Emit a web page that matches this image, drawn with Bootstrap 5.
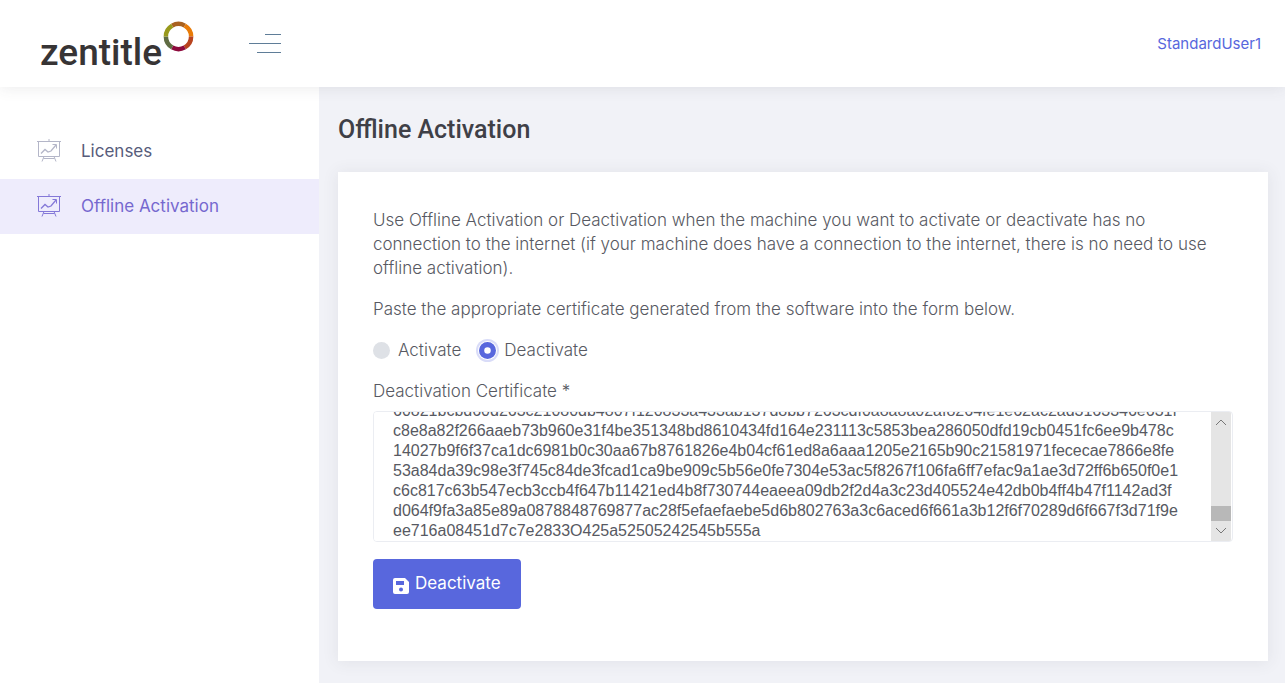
<!DOCTYPE html>
<html lang="en">
<head>
<meta charset="utf-8">
<meta name="viewport" content="width=device-width, initial-scale=1">
<title>Zentitle - Offline Activation</title>
<link href="https://cdn.jsdelivr.net/npm/bootstrap@5.3.0/dist/css/bootstrap.min.css" rel="stylesheet">
<style>
  body { font-family: Inter, "Open Sans", sans-serif; font-size: 17px; line-height: 24px; font-weight: 300; color: #575962; background: #f1f2f7; }
  .topbar { height: 87px; padding: 0 24px 0 40px; background: #fff; box-shadow: 0 0 15px rgba(69,65,78,.12); z-index: 2; }
  .logo-word { font-family: Roboto, sans-serif; font-size: 37px; font-weight: 500; fill: #373435; }
  .menu-toggle { margin-left: 54px; }
  .user-link { font-size: 15px; line-height: 20px; font-weight: 400; color: #5867dd; }
  .sidebar { width: 319px; padding-top: 37px; background: #fff; }
  .sidebar .nav-link { height: 55px; padding: 0 37px 2px; gap: 20px; font-size: 17px; font-weight: 400; color: #575c7b; }
  .sidebar .nav-link svg { color: #b4b6c8; }
  .sidebar .nav-link.active { background: #eeecfc; color: #7668cf; }
  .sidebar .nav-link.active svg { color: #8478d8; }
  .content { padding: 28px 17px 22px 19px; }
  .page-title { font-family: Roboto, sans-serif; font-size: 25px; line-height: 30px; font-weight: 500; color: #3f4047; margin-bottom: 27px; }
  .panel { padding: 36px 35px 52px; background: #fff; box-shadow: 0 1px 15px 1px rgba(69,65,78,.08); }
  .stack-item { margin-bottom: 17px; }
  .form-check-input { width: 17px; height: 17px; margin: 0; border: 0; background-color: #dee1e6; }
  .form-check-input:checked { background-color: #5867dd; background-size: 13px 13px; box-shadow: 0 0 0 1px #fff, 0 0 0 3px #d9dcf8; }
  .choices { gap: 18px; }
  .choice { gap: 8px; }
  .cert-field { height: 131px; border: 1px solid #ebedf2; border-radius: 4px; overflow: hidden; }
  .cert-field textarea { font-family: "Liberation Sans", sans-serif; font-size: 16px; line-height: 20px; font-weight: 400; color: #575962; padding: 0 16px 0 19px; border: 0; border-radius: 0; resize: none; overflow: hidden; white-space: pre; }
  .cert-field textarea:focus { color: #575962; box-shadow: none; }
  .scroll-track { width: 20px; margin-right: 1px; background: #e5e5e5; }
  .scroll-thumb { height: 15px; background: #b8b8b8; }
  .btn-submit { height: 50px; padding: 0 20px; gap: 6px; font-size: 17px; font-weight: 400; color: #fff; background: #5867dd; border: 0; border-radius: 4px; }
  .btn-submit:hover { color: #fff; background: #4757d6; }
</style>
</head>
<body class="min-vh-100 d-flex flex-column">
<header class="topbar d-flex align-items-center position-relative">
  <a href="#" aria-label="zentitle">
    <svg class="d-block" width="155" height="60" viewBox="0 0 155 60">
      <text class="logo-word" x="0" y="51">zentitle</text>
      <g fill="none" stroke-width="4.5" transform="translate(138.5 22.500)">
        <path stroke="#a9611f" d="M-6.3 -10.9A12.6 12.6 0 0 1 6.3 -10.9"/>
        <path stroke="#e87b07" d="M6.3 -10.9A12.6 12.6 0 0 1 12.6 0"/>
        <path stroke="#b8441f" d="M12.6 0A12.6 12.6 0 0 1 6.3 10.9"/>
        <path stroke="#8d0a3c" d="M6.3 10.9A12.6 12.6 0 0 1 -6.3 10.9"/>
        <path stroke="#5f6c43" d="M-6.3 10.9A12.6 12.6 0 0 1 -12.6 0"/>
        <path stroke="#98991c" d="M-12.6 0A12.6 12.6 0 0 1 -6.3 -10.9"/>
      </g>
    </svg>
  </a>
  <button type="button" class="menu-toggle btn p-0 border-0" aria-label="Toggle menu">
    <svg class="d-block" width="32" height="20" viewBox="0 0 32 20" fill="#5f7d98"><path d="M16 0h16v1H16zM0 9h32v1H0zM8 18h24v1H8z"/></svg>
  </button>
  <a href="#" class="user-link ms-auto text-decoration-none">StandardUser1</a>
</header>

<div class="d-flex flex-grow-1">
  <nav class="sidebar nav flex-column flex-nowrap flex-shrink-0" aria-label="Main">
    <a class="nav-link d-flex align-items-center" href="#">
      <svg width="24" height="24" viewBox="0 0 24 24" fill="none" stroke="currentColor"><path d="M0 2.5h24M1.5 2.5v15h21v-15M12 0v2M15.5 5.5h4v4M7 17.500l-2 5M17 17.500l2 5M6.500 19.500h11"/><path stroke-width="1.3" d="M4 14.500l4-4 3 2.500 3-1 5-6"/></svg>
      <span>Licenses</span>
    </a>
    <a class="nav-link active d-flex align-items-center" href="#" aria-current="page">
      <svg width="24" height="24" viewBox="0 0 24 24" fill="none" stroke="currentColor"><path d="M0 2.5h24M1.5 2.5v15h21v-15M12 0v2M15.5 5.5h4v4M7 17.500l-2 5M17 17.500l2 5M6.500 19.500h11"/><path stroke-width="1.3" d="M4 14.500l4-4 3 2.500 3-1 5-6"/></svg>
      <span>Offline Activation</span>
    </a>
  </nav>

  <main class="content flex-grow-1">
    <h1 class="page-title">Offline Activation</h1>
    <form class="panel">
      <p class="stack-item">Use Offline Activation or Deactivation when the machine you want to activate or deactivate has no connection to the internet (if your machine does have a connection to the internet, there is no need to use offline activation).</p>
      <p class="stack-item">Paste the appropriate certificate generated from the software into the form below.</p>
      <div class="choices stack-item d-flex">
        <div class="choice d-flex align-items-center">
          <input class="form-check-input" type="radio" name="mode" id="activate">
          <label for="activate">Activate</label>
        </div>
        <div class="choice d-flex align-items-center">
          <input class="form-check-input" type="radio" name="mode" id="deactivate" checked>
          <label for="deactivate">Deactivate</label>
        </div>
      </div>
      <label class="d-block mb-2" for="certificate">Deactivation Certificate *</label>
      <div class="cert-field stack-item d-flex">
        <textarea class="form-control h-100" id="certificate" spellcheck="false">
60821bcbd60d263c21080db4807f120833a433ab137d8bb7263cdf0a8a8a02af8264fe1e62ac2ad3163346e631f
c8e8a82f266aaeb73b960e31f4be351348bd8610434fd164e231113c5853bea286050dfd19cb0451fc6ee9b478c
14027b9f6f37ca1dc6981b0c30aa67b8761826e4b04cf61ed8a6aaa1205e2165b90c21581971fececae7866e8fe
53a84da39c98e3f745c84de3fcad1ca9be909c5b56e0fe7304e53ac5f8267f106fa6ff7efac9a1ae3d72ff6b650f0e1
c6c817c63b547ecb3ccb4f647b11421ed4b8f730744eaeea09db2f2d4a3c23d405524e42db0b4ff4b47f1142ad3f
d064f9fa3a85e89a0878848769877ac28f5efaefaebe5d6b802763a3c6aced6f661a3b12f6f70289d6f667f3d71f9e
ee716a08451d7c7e2833O425a52505242545b555a</textarea>
        <div class="scroll-track d-flex flex-column flex-shrink-0 align-items-center" aria-hidden="true">
          <svg width="20" height="20" viewBox="0 0 20 20" fill="none" stroke="#777"><path d="M5 13l5-5 5 5"/></svg>
          <div class="scroll-thumb w-100 mt-auto"></div>
          <svg width="20" height="20" viewBox="0 0 20 20" fill="none" stroke="#777"><path d="M5 7l5 5 5-5"/></svg>
        </div>
      </div>
      <button type="submit" class="btn btn-submit d-inline-flex align-items-center">
        <svg class="mt-1" width="16" height="16" viewBox="0 0 16 16" fill="#fff"><path fill-rule="evenodd" d="M2 0h10l4 4v10a2 2 0 0 1-2 2H2a2 2 0 0 1-2-2V2a2 2 0 0 1 2-2zM3 3v4h8V3zM8 9.500a2 2 0 1 0 0 4a2 2 0 0 0 0-4z"/></svg>
        <span>Deactivate</span>
      </button>
    </form>
  </main>
</div>
<script src="https://cdn.jsdelivr.net/npm/bootstrap@5.3.0/dist/js/bootstrap.bundle.min.js"></script>
<script>
  const certificate = document.getElementById('certificate');
  certificate.scrollTop = certificate.scrollHeight;
</script>
</body>
</html>
